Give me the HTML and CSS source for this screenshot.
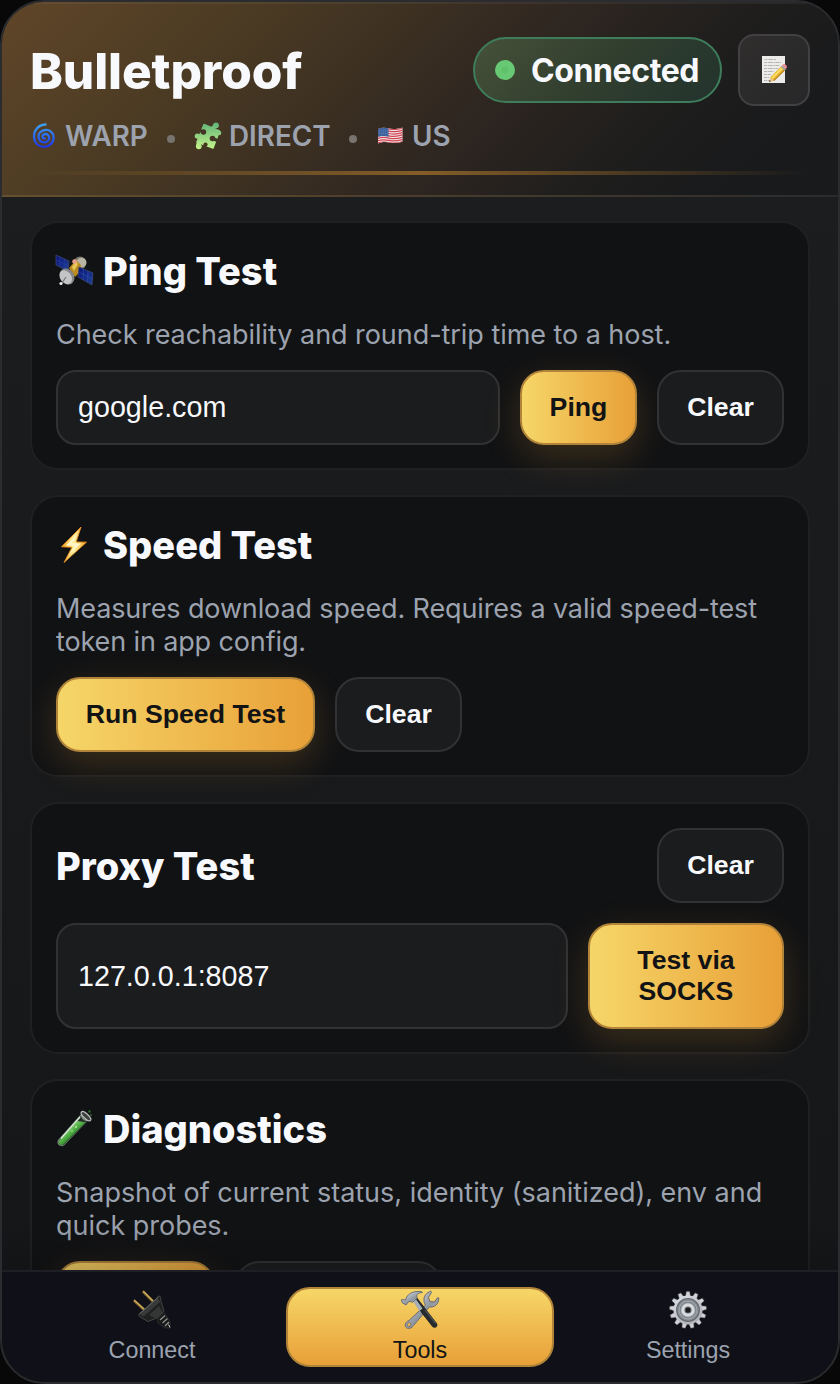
FILE: index.html
```html
<!DOCTYPE html>
<html lang="en">
<head>
<meta charset="utf-8">
<title>Bulletproof</title>
<link rel="stylesheet" href="styles.css">
</head>
<body>
<div class="app">
  <header class="header">
    <div class="header-top">
      <h1 class="brand">Bulletproof</h1>
      <div class="header-actions">
        <div class="status"><span class="status-dot"></span><span class="status-text">Connected</span></div>
        <button class="icon-btn" aria-label="Logs">
          <svg width="28" height="30" viewBox="0 0 28 30">
            <rect x="2" y="1" width="23" height="27" fill="#ecebe9"/>
            <path d="M4.500 4.500h12M4 7.500h17M4 10.500h16M4 13.500h14M4 16.500h10M4 19.500h7M4 22.500h5M4 25.500h5" stroke="#b4b5b6" stroke-width="1" stroke-dasharray="3 .7 5 .8 2 .6"/>
            <path d="M9 27l1.600-5L22 10.500l3.700 3.700L14 25.500z" fill="#e9b832"/>
            <path d="M11.500 22.500L22.700 11.300l1.200 1.200L12.800 23.700z" fill="#ffe06a"/>
            <path d="M13 25.700L24.800 14l.9.800L14.200 25.900z" fill="#b87d18"/>
            <path d="M9 27l1.500-4.500 3.200 3.200z" fill="#e9c795"/>
            <path d="M9 27l.7-2 1.300 1.300z" fill="#333"/>
            <path d="M20.800 11.700l1.400-1.400 3.700 3.700-1.400 1.400z" fill="#9fa4a8"/>
            <path d="M22.200 10.300l.8-.8c1.500-1.500 4.800 1.500 3.700 3.500l-.9 1z" fill="#ea8d95"/>
          </svg>
        </button>
      </div>
    </div>
    <div class="meta">
      <span class="meta-item warp">
        <svg width="24" height="26" viewBox="0 0 24 26">
          <defs><linearGradient id="cy" gradientUnits="userSpaceOnUse" x1="0" y1="1" x2="0" y2="25"><stop offset="0" stop-color="#3aa3f5"/><stop offset="1" stop-color="#1c32e8"/></linearGradient></defs>
          <path d="M13.500 1.500C6 2 1.800 7.500 2 14c.2 6 4.700 10 10.300 9.800 5.500-.2 9.500-4.500 9.300-9.500C21.400 9.500 17.500 6.500 13.200 7 9 7.500 6.300 10.500 6.500 14c.2 3.300 2.700 5.600 5.900 5.400 2.900-.2 4.800-2.400 4.700-4.900-.1-2.200-1.800-3.700-3.900-3.500-1.900.2-2.900 1.600-2.700 3.100.2 1.200 1.300 1.700 2.300 1.400" fill="none" stroke="url(#cy)" stroke-width="2.300" stroke-linecap="round"/>
        </svg>
        <span>WARP</span>
      </span>
      <span class="meta-dot"></span>
      <span class="meta-item direct">
        <svg width="28" height="28" viewBox="0 0 28 28">
          <defs>
            <linearGradient id="pz" gradientUnits="userSpaceOnUse" x1="0" y1="0" x2="0" y2="28"><stop offset="0" stop-color="#5fb37a"/><stop offset="1" stop-color="#c8f58a"/></linearGradient>
            <mask id="pm" maskUnits="userSpaceOnUse" x="0" y="0" width="28" height="28">
              <path d="M10 2.500l15.500 6.500L19 26 3 20z" fill="#fff" stroke="#fff" stroke-width="1.500" stroke-linejoin="round"/>
              <path d="M18 7l4-4M5 19l-1 5" stroke="#fff" stroke-width="4"/>
              <circle cx="22" cy="3.300" r="2.900" fill="#fff"/><circle cx="4.800" cy="24.300" r="2.900" fill="#fff"/><circle cx="3.300" cy="14" r="2.600" fill="#fff"/><circle cx="25" cy="11" r="2.300" fill="#fff"/>
              <circle cx="9.500" cy="10" r="2.700" fill="#000"/><path d="M9.500 10L4.500 8" stroke="#000" stroke-width="3"/>
              <circle cx="18.500" cy="16.500" r="2.800" fill="#000"/><path d="M18.500 16.500l6 2.500" stroke="#000" stroke-width="3"/>
              <circle cx="11.500" cy="22.500" r="2.100" fill="#000"/><path d="M11.500 22.500l-1.500 4" stroke="#000" stroke-width="2.500"/>
            </mask>
          </defs>
          <rect width="28" height="28" fill="url(#pz)" mask="url(#pm)"/>
        </svg>
        <span>DIRECT</span>
      </span>
      <span class="meta-dot"></span>
      <span class="meta-item us">
        <svg width="27" height="20" viewBox="0 0 27 20">
          <defs><clipPath id="fl"><path d="M1 3c4-1.500 7-1.400 11-.5s9 .5 13.500-1v14c-4.500 1.800-9 1.800-13 .9S4.500 15.700 1 17.500z"/></clipPath></defs>
          <g clip-path="url(#fl)">
            <rect width="27" height="20" fill="#f3e6e6"/>
            <g fill="none" stroke="#d04453" stroke-width="1.250"><path id="st" d="M0 3.500c4-1.600 8-1.500 12-.6s9 .6 14-1.100"/><use href="#st" y="2.300"/><use href="#st" y="4.600"/><use href="#st" y="6.900"/><use href="#st" y="9.200"/><use href="#st" y="11.500"/><use href="#st" y="13.800"/></g>
            <path d="M0 2.500C4 1 8 1.200 11.500 2.200V10.700C8 9.800 4 9.700 0 11z" fill="#3f639f"/>
            <path d="M2 5h9M2 7.500h9" stroke="#7f9ac8" stroke-width=".7" stroke-dasharray=".8 1.200"/>
          </g>
        </svg>
        <span>US</span>
      </span>
    </div>
    <div class="glow-line"></div>
  </header>

  <main class="content">
    <section class="card">
      <h2 class="title">
        <svg width="40" height="36" viewBox="0 0 40 36">
          <defs><linearGradient id="pn" x1="0" y1="0" x2="1" y2="1"><stop offset="0" stop-color="#0b1377"/><stop offset="1" stop-color="#1f4296"/></linearGradient></defs>
          <circle cx="25" cy="10" r="6.500" fill="#77736b"/><circle cx="26.500" cy="9.500" r="4.800" fill="#b9b3a6"/>
          <path d="M14 15l7-8 5 5-1 7-5 5z" fill="#b98b20"/><path d="M17 14l4-6 2 3-4 7z" fill="#e8c85b"/>
          <circle cx="19.500" cy="8.500" r="2.300" fill="#e9a08f"/>
          <path d="M1 2l13 6-1 10L1 12z" fill="url(#pn)" stroke="#39456f" stroke-width=".8"/>
          <path d="M5 3.800l-.3 10M9.500 6l-.3 10M1 7l12.500 6" stroke="#2b40a8" stroke-width=".5"/>
          <path d="M24 14l14 6-1 12-14-8z" fill="url(#pn)" stroke="#39456f" stroke-width=".8"/>
          <path d="M23.500 19l14 7M28.500 16l-.5 11M33 18l-.5 11" stroke="#3356b5" stroke-width=".5"/>
          <ellipse cx="12" cy="23.500" rx="7" ry="8.500" transform="rotate(-35 12 23.500)" fill="#85878a"/>
          <ellipse cx="10.800" cy="24.200" rx="5.500" ry="7.500" transform="rotate(-35 10.800 24.200)" fill="#c3c5c6"/>
          <path d="M11 24l-4 6" stroke="#72777b" stroke-width="1.200"/><circle cx="6" cy="30.500" r="1.600" fill="#eee"/>
        </svg>
        <span>Ping Test</span>
      </h2>
      <p class="desc d-ping">Check reachability and round-trip time to a host.</p>
      <div class="row">
        <input class="field" value="google.com" aria-label="Host">
        <button class="btn primary w-ping">Ping</button>
        <button class="btn w-clear">Clear</button>
      </div>
    </section>

    <section class="card">
      <h2 class="title">
        <svg width="40" height="40" viewBox="0 0 40 40">
          <defs><linearGradient id="bt" x1="0" y1="0" x2="1" y2="0"><stop offset="0" stop-color="#f5aa22"/><stop offset=".5" stop-color="#fff3a5"/><stop offset="1" stop-color="#f5a623"/></linearGradient></defs>
          <path d="M26 2L6.500 21.800l10.500.5L9 37.500l22.500-20.300-10.300-.3z" fill="url(#bt)" stroke="#e58b1e" stroke-width=".9"/>
          <path d="M22.500 9L11 20.500l9 .3L14 29l12-10.500-9-.2z" fill="#fff6c9"/>
        </svg>
        <span>Speed Test</span>
      </h2>
      <p class="desc d-speed">Measures download speed. Requires a valid speed-test<br>token in app config.</p>
      <div class="row">
        <button class="btn primary w-speed">Run Speed Test</button>
        <button class="btn w-clear">Clear</button>
      </div>
    </section>

    <section class="card proxy">
      <div class="row head">
        <h2 class="title"><span>Proxy Test</span></h2>
        <button class="btn w-clear">Clear</button>
      </div>
      <div class="row stretch">
        <input class="field" value="127.0.0.1:8087" aria-label="Proxy address">
        <button class="btn primary w-socks">Test via<br>SOCKS</button>
      </div>
    </section>

    <section class="card">
      <h2 class="title">
        <svg width="40" height="40" viewBox="0 0 40 40">
          <defs><linearGradient id="tb" x1="0" y1="0" x2="1" y2="1"><stop offset=".3" stop-color="#8bd878"/><stop offset=".5" stop-color="#47a63c"/><stop offset=".65" stop-color="#1f6a22"/></linearGradient></defs>
          <path d="M27 4L3 31c-2.200 3.500 2.500 8 6 5.500L34.500 10z" fill="#78877b"/>
          <path d="M25.800 7L4 31.500c-1.500 2.800 1.800 6 4.800 4.300L32 12c-2 .5-5-1-6.200-5z" fill="#252b28"/>
          <path d="M22.500 12L4 31.800c-1.200 2.500 1.800 5.400 4.600 3.800L30.500 13.300z" fill="url(#tb)"/>
          <path d="M25 8L6 29.500" stroke="#d5ead0" stroke-width="1.500"/>
          <ellipse cx="31" cy="7.200" rx="6.200" ry="2.300" transform="rotate(43 31 7.200)" fill="#3d4140" stroke="#b9bdbb" stroke-width="1.300"/>
          <circle cx="34.500" cy="2.500" r="1.200" fill="#286d2b"/><circle cx="36" cy="6" r=".8" fill="#3a9b3a"/>
          <circle cx="21" cy="18" r=".9" fill="#b9f0a5"/><circle cx="17" cy="22" r=".8" fill="#b9f0a5"/>
        </svg>
        <span>Diagnostics</span>
      </h2>
      <p class="desc d-diag">Snapshot of current status, identity (sanitized), env and<br>quick probes.</p>
      <div class="row">
        <button class="btn primary w-run"></button>
        <button class="btn w-copy"></button>
      </div>
    </section>
  </main>

  <nav class="tabs">
    <button class="tab">
      <svg width="40" height="40" viewBox="0 0 40 40">
        <path d="M2 10.500l11 10M11 1.500l10 10" stroke="#806631" stroke-width="2.600"/><path d="M2 10l11 10M11 1l10 10" stroke="#d1ad5c" stroke-width="1.300"/>
        <path d="M24 9l2-2.500c1.500-1 3 0 2.700 1.700L29 11l3 10-7 7-9 3.500-8-4.500-1.500-2.500z" fill="#1f2020" stroke="#4c4e4e" stroke-width=".8"/>
        <path d="M8 23.500L25 8l3.500 3.500L11 27z" fill="#383a39"/><path d="M7.500 24L26.500 7" stroke="#666866" stroke-width="1"/>
        <path d="M17 25L27 16l4 7-6 6z" fill="#343636"/>
        <path d="M26 28l6-5.500 6 9v6.500h-5l-7-5z" fill="#171818" stroke="#3b3c3c" stroke-width=".6"/>
        <path d="M28 30l5-4.500M30.500 33l5-4.500M33 36l4-4" stroke="#8e908f" stroke-width="1.300"/><path d="M36.500 34.500l1.500 3" stroke="#c8c8c8"/>
      </svg>
      <span>Connect</span>
    </button>
    <button class="tab active">
      <svg width="40" height="40" viewBox="0 0 40 40">
        <defs><linearGradient id="mt" x1="0" y1="0" x2="1" y2="1"><stop offset="0" stop-color="#eef1f5"/><stop offset=".55" stop-color="#8e96a0"/><stop offset="1" stop-color="#d3d4da"/></linearGradient></defs>
        <path d="M25.500 15c-2.300-3-2.300-8.500 1.200-11.500l4-2.500.8 1.500-3 4.800 1.300 4.200 4.500.5 3.500-4.500 1 .5c0 6.500-4.500 9.500-9.500 9L13.500 35.500c-1.500 3-6 4-7.800 1.500-1.400-2.500.3-5.500 3.300-6.500z" fill="url(#mt)" stroke="#6d6b70" stroke-width="1"/>
        <circle cx="9" cy="34.500" r="1.900" fill="#eab650" stroke="#6d6b70" stroke-width=".8"/>
        <path d="M13 10l4-2.500 20 26c1.500 3-2 5.500-4.500 3.500L21.500 23z" fill="#262a2d"/><path d="M12.500 10.500l3-2 7 10-3 2.500z" fill="#a5aeb9"/>
        <path d="M25 20l10.500 13.500" stroke="#50575c" stroke-width="1.100"/>
        <path d="M5.500 10C7 4 12.500.8 21 1.500l1.500 1C18 3 16.500 4 17 8l-4.500 4.500c-2-1.500-3.500-1.500-5 .5L6 15l-4-2.500-.5-3z" fill="url(#mt)" stroke="#6c7077" stroke-width="1"/>
      </svg>
      <span>Tools</span>
    </button>
    <button class="tab">
      <svg width="40" height="40" viewBox="0 0 40 40">
        <defs><linearGradient id="gr" gradientUnits="userSpaceOnUse" x1="8" y1="4" x2="30" y2="36"><stop offset="0" stop-color="#dde1e6"/><stop offset="1" stop-color="#aaa9b0"/></linearGradient></defs>
        <g fill="#cfd2d7" stroke="#625d5b" stroke-width=".4">
          <path id="to" d="M17.400 7l1-5.500h3.200l1 5.500z"/>
          <use href="#to" transform="rotate(27.700 20 20)"/><use href="#to" transform="rotate(55.400 20 20)"/><use href="#to" transform="rotate(83.100 20 20)"/><use href="#to" transform="rotate(110.800 20 20)"/><use href="#to" transform="rotate(138.500 20 20)"/><use href="#to" transform="rotate(166.200 20 20)"/><use href="#to" transform="rotate(193.800 20 20)"/><use href="#to" transform="rotate(221.500 20 20)"/><use href="#to" transform="rotate(249.200 20 20)"/><use href="#to" transform="rotate(276.900 20 20)"/><use href="#to" transform="rotate(304.600 20 20)"/><use href="#to" transform="rotate(332.300 20 20)"/>
        </g>
        <circle cx="20" cy="20" r="14.500" fill="url(#gr)"/><circle cx="20" cy="20" r="11.300" fill="#858b90" stroke="#636a70" stroke-width="1.200"/>
        <circle cx="20" cy="20" r="9" fill="none" stroke="#a3a9ad" stroke-width="1"/>
        <circle cx="20" cy="20" r="5.200" fill="#6b6d70" stroke="#d5dbdf" stroke-width="3.200"/><circle cx="20" cy="20" r="2.600" fill="#1c1b1e"/>
      </svg>
      <span>Settings</span>
    </button>
  </nav>
</div>
</body>
</html>
```
FILE: styles.css
```css
* { box-sizing: border-box; }
body { margin: 0; background: #080809; font-family: Inter, "Liberation Sans", sans-serif; color: #f8f9fc; }
h1, h2, p { margin: 0; }
button, input { font-family: "Liberation Sans", Arial, sans-serif; margin: 0; }
svg { display: block; flex: none; }

.app {
  width: 840px; height: 1384px;
  display: flex; flex-direction: column;
  border: 2px solid #2b2c2f; border-radius: 44px;
  overflow: hidden;
  background: linear-gradient(#1d1e20, #151618);
}

.header {
  height: 195px; flex: none;
  padding: 30px 28px 0 29px;
  border-bottom: 2px solid;
  border-image: linear-gradient(90deg, #65502f, #4a3d2b 50%, #2b2c2e) 1;
  box-shadow: inset 0 2px rgba(255, 255, 255, .05);
  background: linear-gradient(135deg, #604629 0%, #4a3a23 26%, #302721 55%, #1f1e1d 74%, #191a1c 88%);
}
.header-top { display: flex; align-items: center; justify-content: space-between; height: 76px; }
.brand { padding-top: 2px; font-size: 49.5px; font-weight: 850; line-height: 60px; letter-spacing: -.1px; white-space: nowrap; margin-left: -1px; }
.header-actions { display: flex; align-items: center; gap: 16px; }
.status {
  width: 249px; height: 66px; padding-left: 20px;
  display: flex; align-items: center; gap: 16px;
  border: 2px solid #3e7d5b; border-radius: 33px;
  background: linear-gradient(135deg, #465139, #33402f 45%, #22332d);
}
.status-dot { width: 20px; height: 20px; border-radius: 50%; background: radial-gradient(#5fc16a 0 3px, #68c974 4px); }
.status-text { font-size: 32px; font-weight: 700; letter-spacing: -.4px; white-space: nowrap; }
.icon-btn {
  width: 72px; height: 72px; padding: 0;
  display: flex; align-items: center; justify-content: center;
  border: 2px solid #414042; border-radius: 16px;
  background: linear-gradient(135deg, #302e2d, #272729);
}

.meta { display: flex; align-items: center; height: 34px; margin-top: 11px; font-size: 27.8px; font-weight: 600; color: #9ca3af; white-space: nowrap; }
.meta-item { display: flex; align-items: center; }
.warp { width: 136px; gap: 9px; padding-left: 1px; }
.direct { width: 155px; gap: 7px; margin-left: 19px; }
.us { gap: 8px; margin-left: 20px; }
.meta-dot { width: 8px; height: 8px; border-radius: 50%; background: #77736e; position: relative; top: 3px; }
.glow-line {
  height: 4px; margin-top: 18px;
  background: linear-gradient(90deg, rgba(190, 130, 45, 0), rgba(190, 130, 45, .6) 50%, rgba(190, 130, 45, 0));
}

.content {
  flex: 1; min-height: 0; overflow: hidden; position: relative;
  display: flex; flex-direction: column; gap: 25px;
  padding: 24px 28px 0;
}
.content::after {
  content: ""; position: absolute; left: 0; right: 0; bottom: 0; height: 48px;
  background: linear-gradient(rgba(10, 10, 14, 0), rgba(10, 10, 14, .22));
}
.card { flex: none; padding: 25px 24px 24px; border: 2px solid #1f2022; border-radius: 28px; background: #111214; }
.card.proxy { padding: 24px; }
.title { display: flex; align-items: center; gap: 8px; height: 46px; margin-bottom: 24px; font-size: 38px; font-weight: 800; white-space: nowrap; }
.title svg { margin-left: -1px; }
.desc { margin-bottom: 19px; font-size: 27px; line-height: 33px; color: #9ca3af; white-space: nowrap; }
.d-ping { letter-spacing: -.05px; }
.d-speed { letter-spacing: -.13px; }
.d-diag { letter-spacing: -.02px; }
.row { display: flex; gap: 20px; }
.head { align-items: center; justify-content: space-between; margin-bottom: 20px; }
.head .title { margin-bottom: 0; padding-top: 1px; }

.field, .btn { height: 75px; margin-bottom: -1px; border: 2px solid #323234; border-radius: 24px; background: #1b1c1e; color: #f8f9fc; line-height: 31px; }
.head .btn { margin-bottom: 0; }
.field { flex: 1; min-width: 0; padding: 0 20px; border-radius: 20px; outline: 0; font-size: 28.7px; }
.btn { flex: none; padding: 0; font-size: 26.67px; font-weight: 700; white-space: nowrap; }
.btn.primary {
  border-color: #b18439; color: #121314;
  background: linear-gradient(90deg, #f6d668, #e8a038);
  box-shadow: 0 12px 36px rgba(232, 160, 56, .2);
}
.stretch > * { height: 106px; }
.w-ping { width: 117px; }
.w-clear { width: 127px; }
.w-speed { width: 259px; }
.w-socks { width: 196px; }
.w-run { width: 159px; }
.w-copy { width: 207px; }

.tabs {
  flex: none; height: 112px; padding: 15px 16px 0;
  display: grid; grid-template-columns: repeat(3, 268px);
  border-top: 2px solid #1e1f25; background: #101118;
}
.tab {
  height: 80px; padding: 1px 0 0;
  display: flex; flex-direction: column; align-items: center;
  border: 2px solid transparent; border-radius: 24px; background: none;
  color: #9ca3af; font-size: 23.3px; line-height: 40px;
}
.tab.active { border-color: #b18439; background: linear-gradient(#f6d668, #e8a038); color: #121314; }
```
